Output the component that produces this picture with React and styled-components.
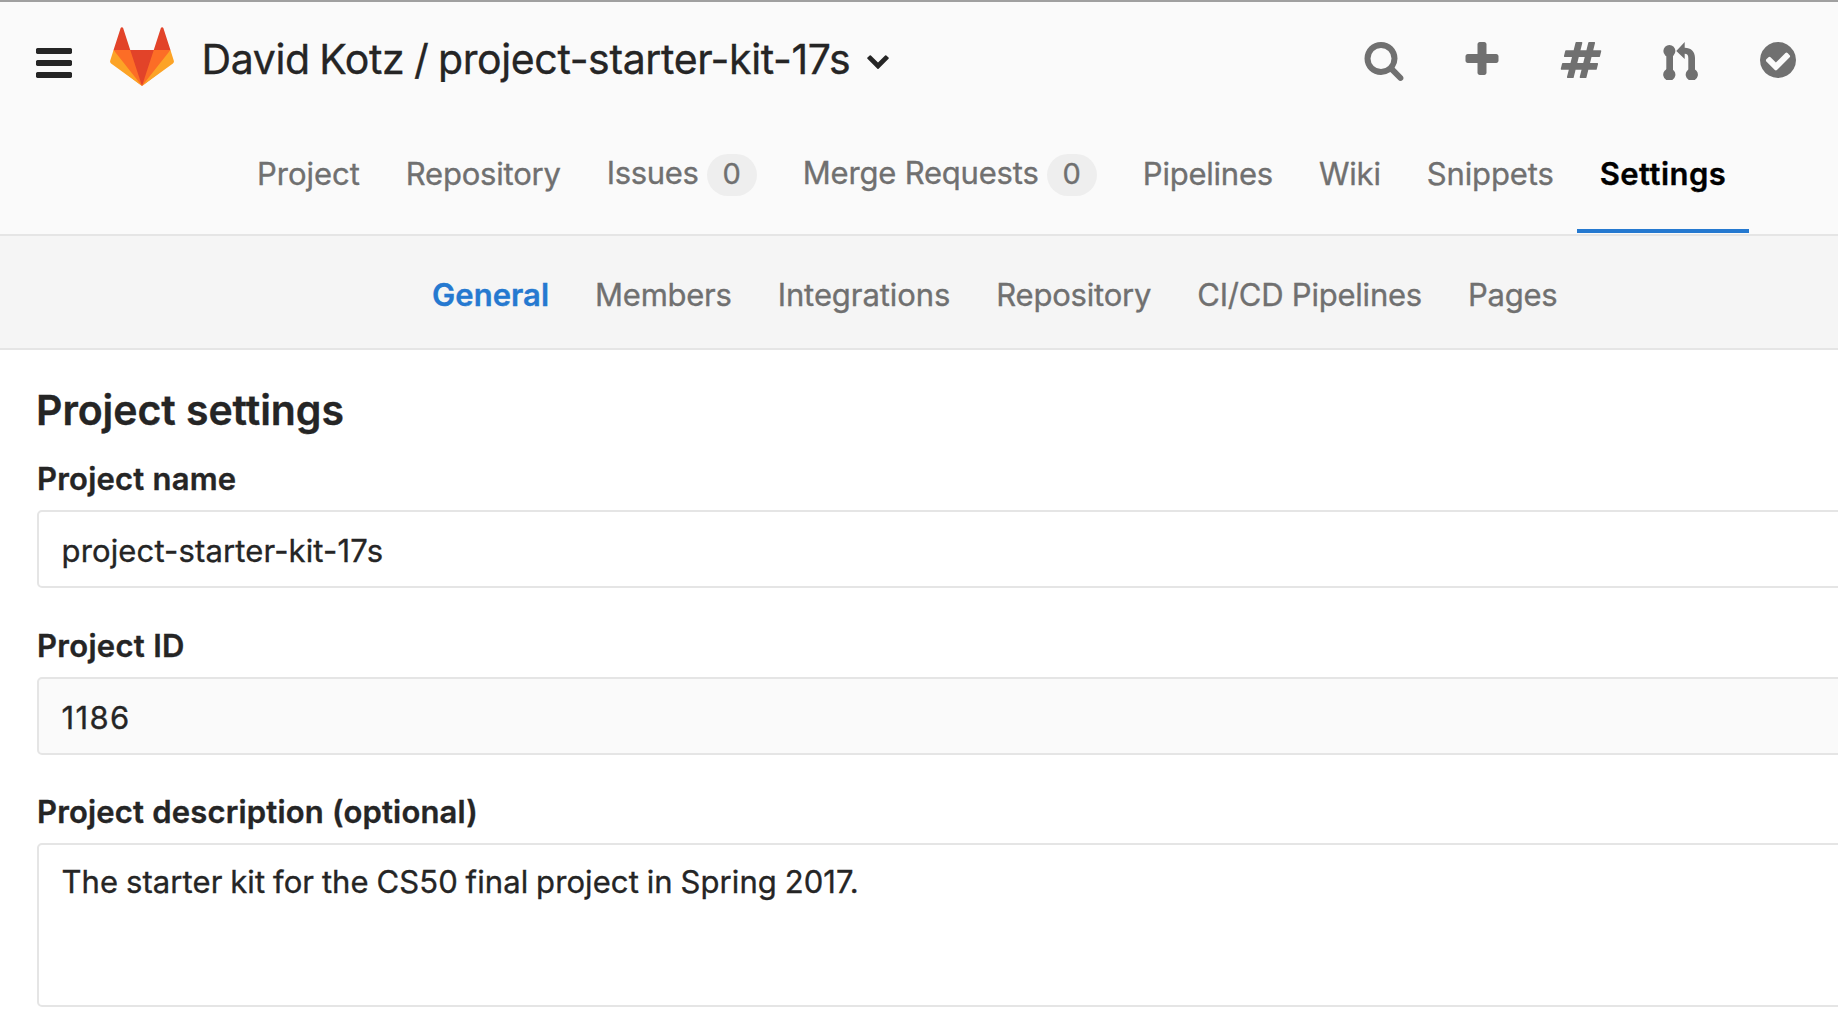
import React from "react";
import styled, { createGlobalStyle } from "styled-components";

const GlobalStyle = createGlobalStyle`
  *, *::before, *::after { box-sizing: border-box; }
  body {
    margin: 0;
    background: #fff;
    color: #252525;
    font-family: Inter, "Liberation Sans", sans-serif;
    font-size: 31px;
    font-variant-ligatures: none;
    -webkit-text-stroke: 0.35px currentColor;
    overflow: hidden;
  }
`;

const Page = styled.div`
  width: 100%;
  height: 1026px;
  overflow: hidden;
`;

const Header = styled.header`
  display: flex;
  align-items: flex-start;
  height: 117px;
  padding: 0 42px 0 33px;
  border-top: 2px solid #a0a0a0;
  background: #fafafa;
`;

const IconButton = styled.button`
  display: flex;
  margin: ${(p) => p.$top || 37}px 0 0;
  padding: 0;
  border: 0;
  background: none;
  color: ${(p) => p.$color || "#707070"};
`;

const Glyph = styled.svg`
  display: block;
  width: ${(p) => p.$size || 42}px;
  height: ${(p) => p.$size || 42}px;
  fill: currentColor;
`;

const Logo = styled.svg`
  display: block;
  width: 64px;
  height: 64px;
  margin: 23px 0 0 35px;
`;

const Title = styled.h1`
  display: flex;
  align-items: flex-start;
  margin: 30px 0 0 27.500px;
  font-size: 41px;
  font-weight: 400;
  line-height: 54px;
  letter-spacing: -0.37px;
  word-spacing: -1.600px;
  white-space: nowrap;
`;

const Caret = styled(Glyph)`
  margin: 16px 0 0 16px;
`;

const Actions = styled.div`
  display: flex;
  margin-left: auto;
`;

const ActionSlot = styled.div`
  display: flex;
  width: ${(p) => p.$width}px;
`;

const PrimaryNav = styled.nav`
  display: flex;
  height: 119px;
  padding-left: 234px;
  border-bottom: 2px solid #e5e5e5;
  background: #fafafa;
`;

const SubNav = styled.nav`
  display: flex;
  height: 114px;
  padding-left: 409px;
  border-bottom: 2px solid #e5e5e5;
  background: #f5f5f5;
`;

const NavLink = styled.a`
  display: flex;
  align-items: flex-start;
  height: ${(p) => (p.$sub ? 112 : 116)}px;
  padding: ${(p) => (p.$sub ? 39 : 37)}px 23px 0;
  border-bottom: ${(p) => (p.$underlined ? "4px solid #2579d0" : "0")};
  color: ${(p) => p.$color || "#707070"};
  font-weight: ${(p) => (p.$color ? 600 : 400)};
  line-height: 40px;
  letter-spacing: ${(p) => p.$spacing || 0}px;
  white-space: nowrap;
`;

const Badge = styled.span`
  height: 42px;
  margin-left: 8px;
  padding: 0 16px;
  border-radius: 21px;
  background: #eee;
  font-size: 29px;
  line-height: 40px;
  letter-spacing: 0;
`;

const NavText = styled.span`
  margin-top: -1px;
`;

const Form = styled.form`
  display: flex;
  flex-direction: column;
  padding: 33px 0 0 37px;
`;

const Heading = styled.h2`
  margin: 0 0 23px -1px;
  font-size: 41px;
  font-weight: 600;
  line-height: 54px;
  letter-spacing: -0.06px;
`;

const Field = styled.div`
  display: flex;
  flex-direction: column;
  margin-bottom: ${(p) => p.$gap || 39}px;
`;

const Label = styled.label`
  height: 50px;
  font-weight: 600;
  line-height: 38px;
  letter-spacing: ${(p) => p.$spacing || 0}px;
`;

const Control = styled.div`
  width: 1840px;
  height: ${(p) => (p.$multiline ? 164 : 78)}px;
  padding: ${(p) => (p.$multiline ? 17 : 19)}px 22.500px;
  border: 2px solid #e5e5e5;
  border-radius: 5px;
  background: ${(p) => (p.$readOnly ? "#fafafa" : "#fff")};
  line-height: 40px;
  letter-spacing: ${(p) => p.$spacing || 0}px;
  word-spacing: -1px;
`;

const icons = {
  bars: "M1664 1344v128q0 26-19 45t-45 19h-1408q-26 0-45-19t-19-45v-128q0-26 19-45t45-19h1408q26 0 45 19t19 45zm0-512v128q0 26-19 45t-45 19h-1408q-26 0-45-19t-19-45v-128q0-26 19-45t45-19h1408q26 0 45 19t19 45zm0-512v128q0 26-19 45t-45 19h-1408q-26 0-45-19t-19-45v-128q0-26 19-45t45-19h1408q26 0 45 19t19 45z",
  chevron: "M1683 808l-742 741q-19 19-45 19t-45-19l-742-741q-19-19-19-45.5t19-45.5l166-165q19-19 45-19t45 19l531 531 531-531q19-19 45-19t45 19l166 165q19 19 19 45.5t-19 45.5z",
  search: "M1216 832q0-185-131.5-316.5t-316.5-131.5-316.5 131.5-131.5 316.5 131.5 316.5 316.5 131.5 316.5-131.5 131.5-316.5zm512 832q0 52-38 90t-90 38q-54 0-90-38l-343-342q-179 124-399 124-143 0-273.5-55.5t-225-150-150-225-55.5-273.5 55.5-273.5 150-225 225-150 273.5-55.5 273.5 55.5 225 150 150 225 55.5 273.5q0 220-124 399l343 343q37 37 37 90z",
  plus: "M1600 736v192q0 40-28 68t-68 28h-416v416q0 40-28 68t-68 28h-192q-40 0-68-28t-28-68v-416h-416q-40 0-68-28t-28-68v-192q0-40 28-68t68-28h416v-416q0-40 28-68t68-28h192q40 0 68 28t28 68v416h416q40 0 68 28t28 68z",
  hash: "M991 1024l64-256h-254l-64 256h254zm768-504l-56 224q-7 24-31 24h-327l-64 256h311q15 0 25 12 10 14 6 28l-56 224q-5 24-31 24h-327l-81 328q-7 24-31 24h-224q-16 0-26-12-9-12-6-28l78-312h-254l-81 328q-7 24-31 24h-225q-15 0-25-12-9-12-6-28l78-312h-311q-15 0-25-12-9-12-6-28l56-224q7-24 31-24h327l64-256h-311q-15 0-25-12-10-14-6-28l56-224q5-24 31-24h327l81-328q7-24 32-24h224q15 0 25 12 9 12 6 28l-78 312h254l81-328q7-24 32-24h224q15 0 25 12 9 12 6 28l-78 312h311q15 0 25 12 9 12 6 28z",
  check: "M1412 734q0-28-18-46l-91-90q-19-19-45-19t-45 19l-408 407-226-226q-19-19-45-19t-45 19l-91 90q-18 18-18 46 0 27 18 45l362 362q19 19 45 19 27 0 46-19l543-543q18-18 18-45zm252 162q0 209-103 385.5t-279.5 279.5-385.5 103-385.5-103-279.5-279.5-103-385.5 103-385.5 279.5-279.5 385.5-103 385.5 103 279.5 279.5 103 385.5z",
};

const Icon = ({ name }) => (
  <Glyph viewBox="0 0 1792 1792">
    <path d={icons[name]} />
  </Glyph>
);

const MergeIcon = () => (
  <Glyph viewBox="0 0 42 42">
    <path d="M3.300 14.500V33H10V14.500zM13.300 12 21.700 3v5.700C28 8.700 32 12.600 32 19v14h-6.700V19c0-2.800-1.100-4.200-3.600-4.200V20z" />
    <circle cx="6.400" cy="12" r="6" />
    <path d="M3.300 41a6.100 6.100 0 1 1 6 0zM25.800 41a6.100 6.100 0 1 1 6 0z" />
  </Glyph>
);

const Tanuki = () => (
  <Logo viewBox="0 0 36 36">
    <path fill="#e24329" d="M2 14l9.380 9v-9l-4-12.280c-.205-.632-1.176-.632-1.380 0z" />
    <path fill="#e24329" d="M34 14l-9.380 9v-9l4-12.280c.205-.632 1.176-.632 1.380 0z" />
    <path fill="#e24329" d="M18 34.380 3 14h30z" />
    <path fill="#fc6d26" d="M18 34.380 11.380 14H2l4 11z" />
    <path fill="#fc6d26" d="M18 34.380 24.620 14H34l-4 11z" />
    <path fill="#fca326" d="M2 14L.1 20.160c-.18.565 0 1.200.5 1.560l17.420 12.660z" />
    <path fill="#fca326" d="M34 14l1.900 6.160c.18.565 0 1.200-.5 1.560L18 34.380z" />
  </Logo>
);

const primaryLinks = [
  { text: "Project", spacing: -0.03 },
  { text: "Repository", spacing: -0.2 },
  { text: "Issues", count: 0, spacing: -0.35 },
  { text: "Merge Requests", count: 0, spacing: -0.2 },
  { text: "Pipelines", spacing: -0.23 },
  { text: "Wiki", spacing: -0.2 },
  { text: "Snippets", spacing: -0.12 },
  { text: "Settings", active: true, spacing: 0.46 },
];

const subLinks = [
  { text: "General", active: true, spacing: 0.04 },
  { text: "Members", spacing: -0.25 },
  { text: "Integrations", spacing: -0.08 },
  { text: "Repository", spacing: -0.2 },
  { text: "CI/CD Pipelines", spacing: -0.22 },
  { text: "Pages", spacing: -0.25 },
];

export default function App() {
  return (
    <Page>
      <GlobalStyle />
      <Header>
        <IconButton $top={40} $color="#252525" aria-label="Menu">
          <Icon name="bars" />
        </IconButton>
        <Tanuki />
        <Title>
          David Kotz / project-starter-kit-17s
          <Caret $size={24} viewBox="0 0 1792 1792">
            <path d={icons.chevron} />
          </Caret>
        </Title>
        <Actions>
          <ActionSlot $width={98}><IconButton aria-label="Search"><Icon name="search" /></IconButton></ActionSlot>
          <ActionSlot $width={99.5}><IconButton aria-label="New"><Icon name="plus" /></IconButton></ActionSlot>
          <ActionSlot $width={103}><IconButton aria-label="Issues"><Icon name="hash" /></IconButton></ActionSlot>
          <ActionSlot $width={94}><IconButton aria-label="Merge requests"><MergeIcon /></IconButton></ActionSlot>
          <ActionSlot $width={39}><IconButton aria-label="Todos"><Icon name="check" /></IconButton></ActionSlot>
        </Actions>
      </Header>
      <PrimaryNav>
        {primaryLinks.map((l) => (
          <NavLink key={l.text} $spacing={l.spacing} $color={l.active && "#000"} $underlined={l.active}>
            {l.count === undefined ? l.text : <NavText>{l.text}</NavText>}
            {l.count !== undefined && <Badge>{l.count}</Badge>}
          </NavLink>
        ))}
      </PrimaryNav>
      <SubNav>
        {subLinks.map((l) => (
          <NavLink key={l.text} $sub $spacing={l.spacing} $color={l.active && "#2579d0"}>
            {l.text}
          </NavLink>
        ))}
      </SubNav>
      <Form>
        <Heading>Project settings</Heading>
        <Field>
          <Label $spacing={0.22}>Project name</Label>
          <Control $spacing={0.15}>project-starter-kit-17s</Control>
        </Field>
        <Field $gap={38}>
          <Label $spacing={0.3}>Project ID</Label>
          <Control $readOnly $spacing={1.4}>1186</Control>
        </Field>
        <Field>
          <Label $spacing={0.18}>Project description (optional)</Label>
          <Control $multiline $spacing={0.09}>The starter kit for the CS50 final project in Spring 2017.</Control>
        </Field>
      </Form>
    </Page>
  );
}
